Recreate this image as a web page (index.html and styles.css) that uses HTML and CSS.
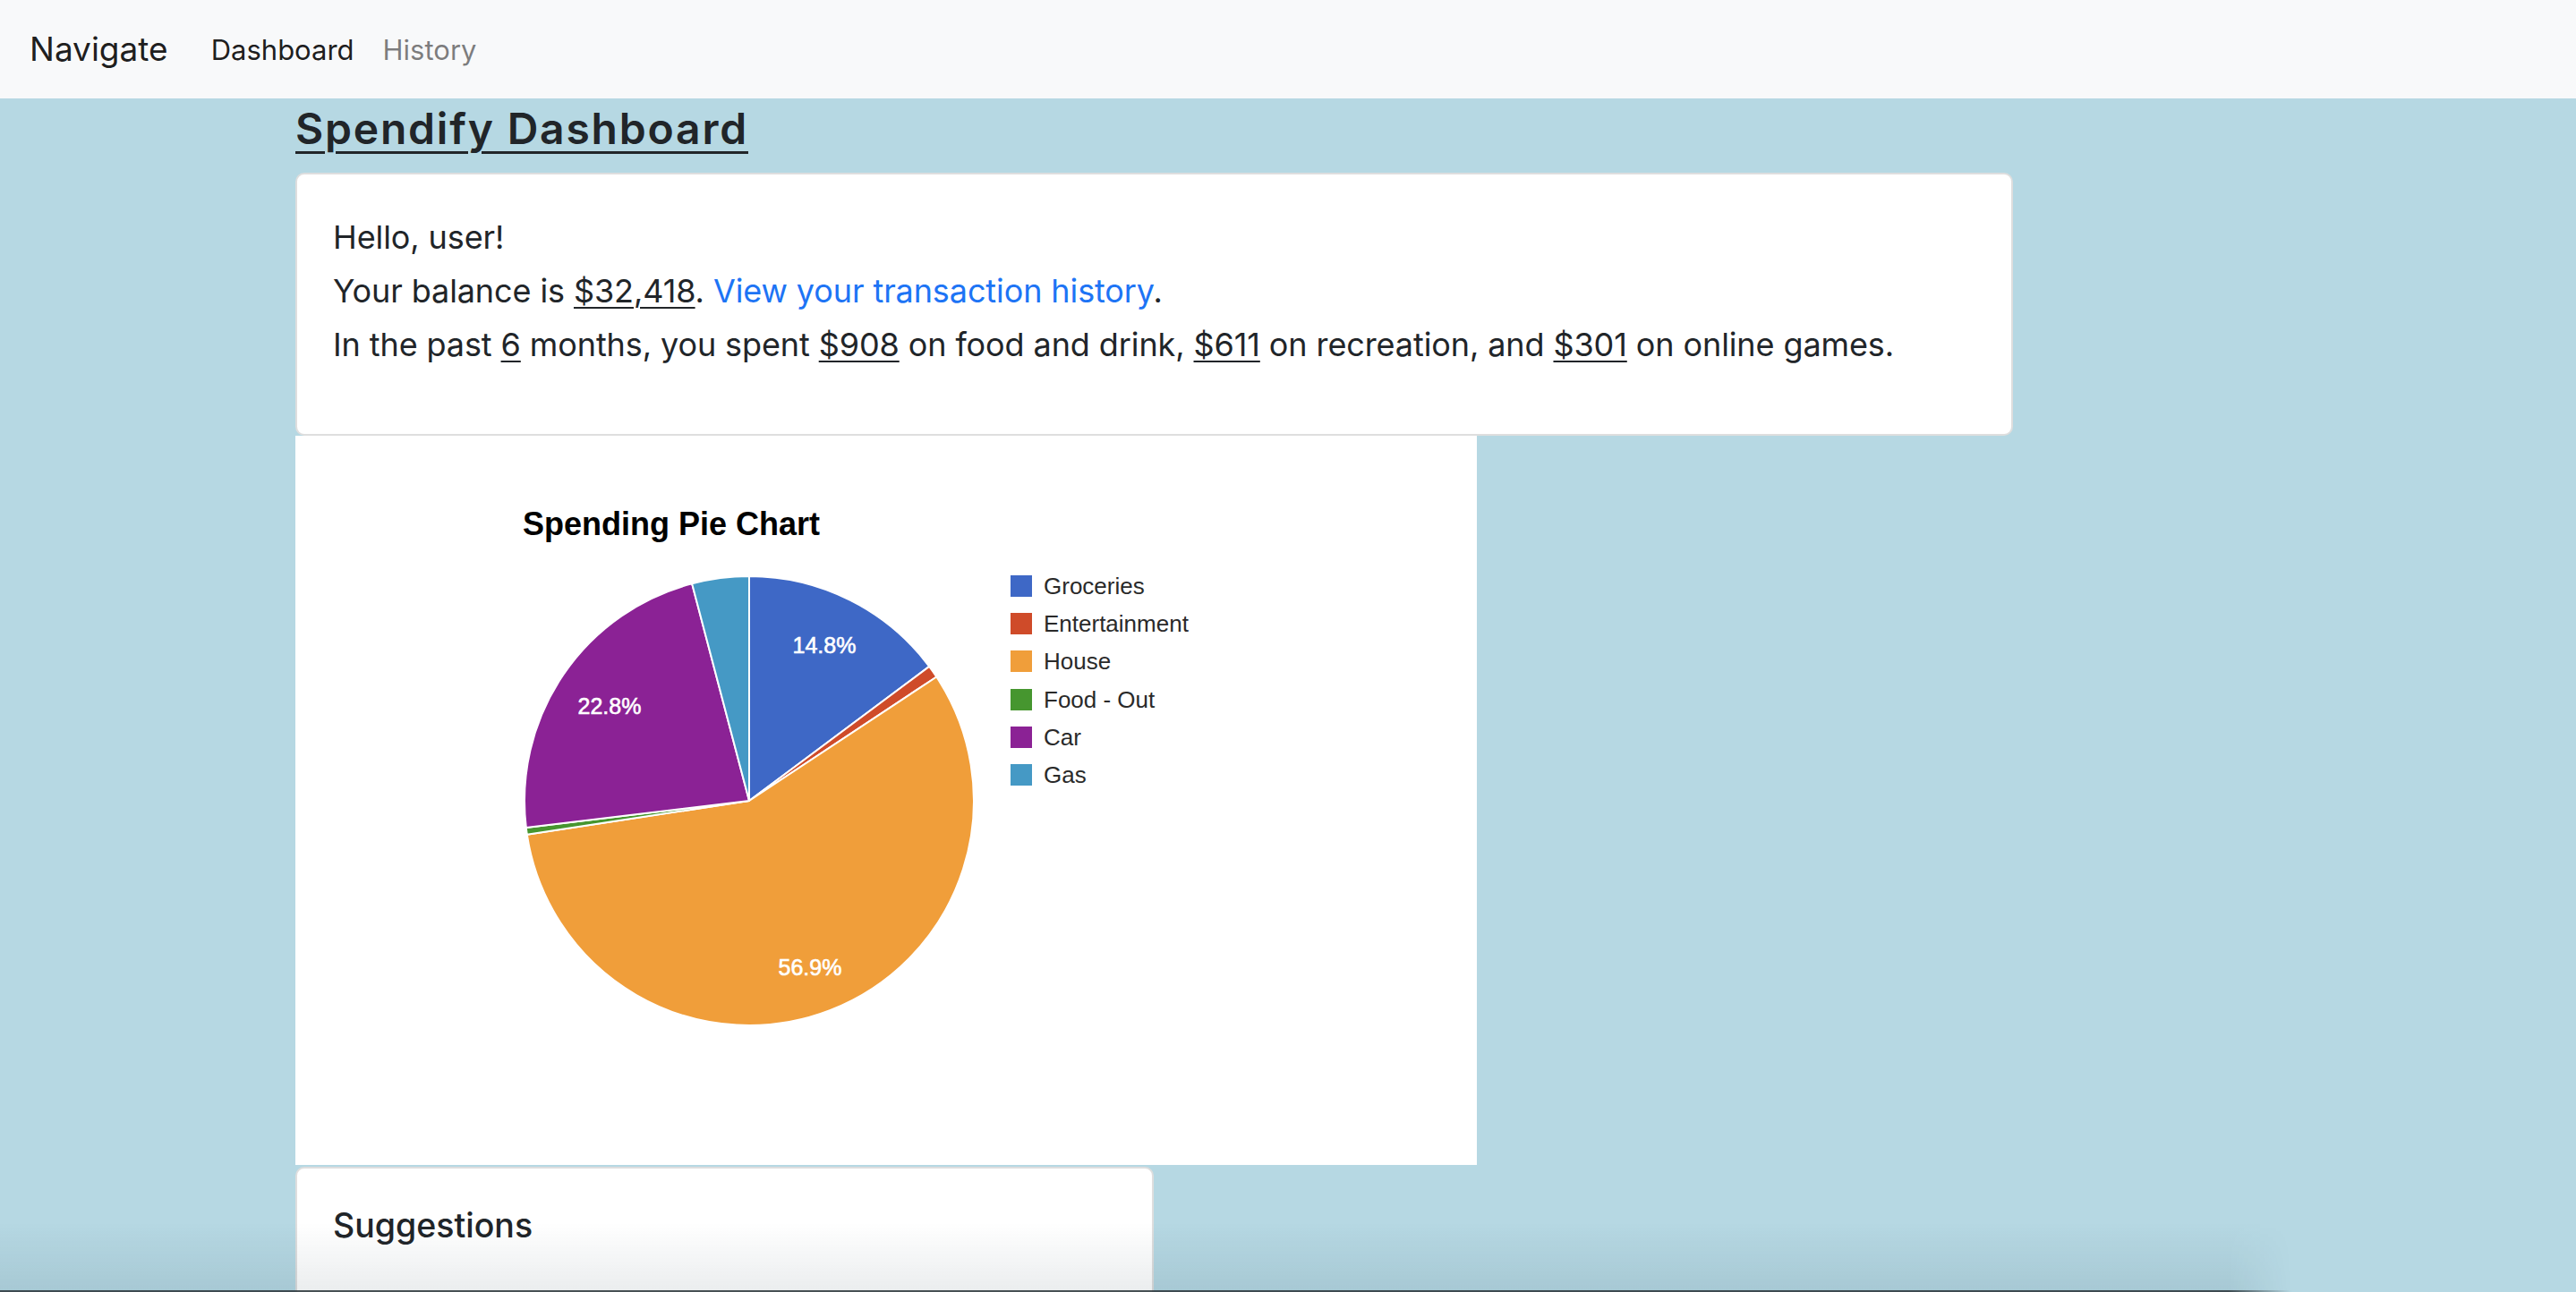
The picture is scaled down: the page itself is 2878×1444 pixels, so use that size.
FILE: index.html
```html
<!DOCTYPE html>
<html lang="en">
<head>
<meta charset="utf-8">
<title>Spendify Dashboard</title>
<link rel="stylesheet" href="styles.css">
</head>
<body>
<nav class="navbar">
  <a class="brand" href="#">Navigate</a>
  <a class="nav-link active" href="#">Dashboard</a>
  <a class="nav-link muted" href="#">History</a>
</nav>
<main class="container">
  <h1 class="page-title"><a href="#">Spendify Dashboard</a></h1>
  <section class="card intro">
    <p class="line">Hello, user!</p>
    <p class="line">Your balance is <u>$32,418</u>. <a class="link" href="#">View your transaction history</a>.</p>
    <p class="line">In the past <u>6</u> months, you spent <u>$908</u> on food and drink, <u>$611</u> on recreation, and <u>$301</u> on online games.</p>
  </section>
  <div class="chart">
    <svg width="1320" height="815" viewBox="0 0 1320 815" xmlns="http://www.w3.org/2000/svg">
      <rect width="1320" height="815" fill="#ffffff"/>
      <text x="254" y="111" class="chart-title">Spending Pie Chart</text>
      <g stroke="#ffffff" stroke-width="2" stroke-linejoin="round">
        <path d="M507,408 L507,157 A251,251 0 0 1 708.2,257.9 Z" fill="#3e68c6"/>
        <path d="M507,408 L708.2,257.9 A251,251 0 0 1 716.3,269.5 Z" fill="#cf4b29"/>
        <path d="M507,408 L716.3,269.5 A251,251 0 1 1 258.8,445.7 Z" fill="#f09e3a"/>
        <path d="M507,408 L258.8,445.7 A251,251 0 0 1 257.8,437.9 Z" fill="#46962f"/>
        <path d="M507,408 L257.8,437.9 A251,251 0 0 1 443.1,165.3 Z" fill="#8b2295"/>
        <path d="M507,408 L443.1,165.3 A251,251 0 0 1 507,157 Z" fill="#4599c5"/>
      </g>
      <g class="slice-label">
        <text x="591" y="243">14.8%</text>
        <text x="351" y="311">22.8%</text>
        <text x="575" y="603">56.9%</text>
      </g>
      <g class="legend">
        <rect x="799" y="156" width="24" height="24" fill="#3e68c6"/>
        <text x="836" y="177">Groceries</text>
        <rect x="799" y="198" width="24" height="24" fill="#cf4b29"/>
        <text x="836" y="219">Entertainment</text>
        <rect x="799" y="240" width="24" height="24" fill="#f09e3a"/>
        <text x="836" y="261">House</text>
        <rect x="799" y="283" width="24" height="24" fill="#46962f"/>
        <text x="836" y="304">Food - Out</text>
        <rect x="799" y="325" width="24" height="24" fill="#8b2295"/>
        <text x="836" y="346">Car</text>
        <rect x="799" y="367" width="24" height="24" fill="#4599c5"/>
        <text x="836" y="388">Gas</text>
      </g>
    </svg>
  </div>
  <section class="card suggestions">
    <h5 class="card-title">Suggestions</h5>
  </section>
</main>
<div class="bottom-shade"></div>
</body>
</html>
```

FILE: styles.css
```css
html, body {
  margin: 0;
  padding: 0;
}
body {
  background: #b6d8e3;
  font-family: Inter, "Noto Sans", sans-serif;
  color: #212529;
  overflow: hidden;
  height: 1444px;
}
.navbar {
  height: 110px;
  background: #f8f9fa;
  display: flex;
  align-items: center;
  padding-left: 33px;
  box-sizing: border-box;
}
.navbar a {
  text-decoration: none;
}
.brand {
  font-size: 37px;
  color: rgba(0, 0, 0, 0.9);
  margin-right: 32px;
  padding-bottom: 2px;
}
.nav-link {
  font-size: 31px;
  padding: 0 16px;
}
.nav-link.active {
  color: rgba(0, 0, 0, 0.9);
}
.nav-link.muted {
  color: rgba(0, 0, 0, 0.5);
}
.container {
  margin-left: 330px;
  display: flex;
  flex-direction: column;
  align-items: flex-start;
}
.page-title {
  margin: 5px 0 0 0;
  font-size: 48px;
  line-height: 58px;
  font-weight: 600;
  letter-spacing: 1.8px;
}
.page-title a {
  color: #212529;
  text-decoration: underline;
  text-decoration-thickness: 3px;
  text-underline-offset: 8px;
}
.card {
  background: #ffffff;
  border: 2.5px solid #dedede;
  border-radius: 10px;
  box-sizing: border-box;
}
.intro {
  margin-top: 20px;
  width: 1919px;
  padding: 40px 40px 70px 40px;
  font-size: 36px;
  letter-spacing: -0.1px;
}
.line {
  margin: 0;
  line-height: 60px;
}
.line u {
  text-decoration-thickness: 2px;
  text-underline-offset: 5px;
}
.link {
  color: #1d74f5;
  text-decoration: none;
}
.chart {
  width: 1320px;
  height: 815px;
  display: flex;
}
.chart-title {
  font-family: "Liberation Sans", Arial, sans-serif;
  font-weight: 700;
  font-size: 36px;
  fill: #000000;
}
.slice-label text {
  font-family: "Liberation Sans", Arial, sans-serif;
  font-size: 25px;
  fill: #ffffff;
  stroke: #ffffff;
  stroke-width: 0.6px;
  text-anchor: middle;
}
.legend text {
  font-family: "Liberation Sans", Arial, sans-serif;
  font-size: 26px;
  fill: #2a2a2a;
}
.suggestions {
  margin-top: 2px;
  width: 959px;
  min-height: 400px;
  padding: 40px;
  border-radius: 10px 10px 0 0;
}
.card-title {
  margin: 0;
  font-size: 37.5px;
  line-height: 48px;
  font-weight: 500;
}
.bottom-shade {
  position: fixed;
  left: 0;
  bottom: 0;
  width: 2560px;
  height: 76px;
  background: linear-gradient(to bottom, rgba(0, 30, 45, 0) 0%, rgba(0, 30, 45, 0.08) 100%);
  -webkit-mask-image: linear-gradient(to right, #000 0, #000 2490px, transparent 2560px);
  mask-image: linear-gradient(to right, #000 0, #000 2490px, transparent 2560px);
  border-bottom: 2px solid rgba(40, 50, 55, 0.85);
  pointer-events: none;
}
```
